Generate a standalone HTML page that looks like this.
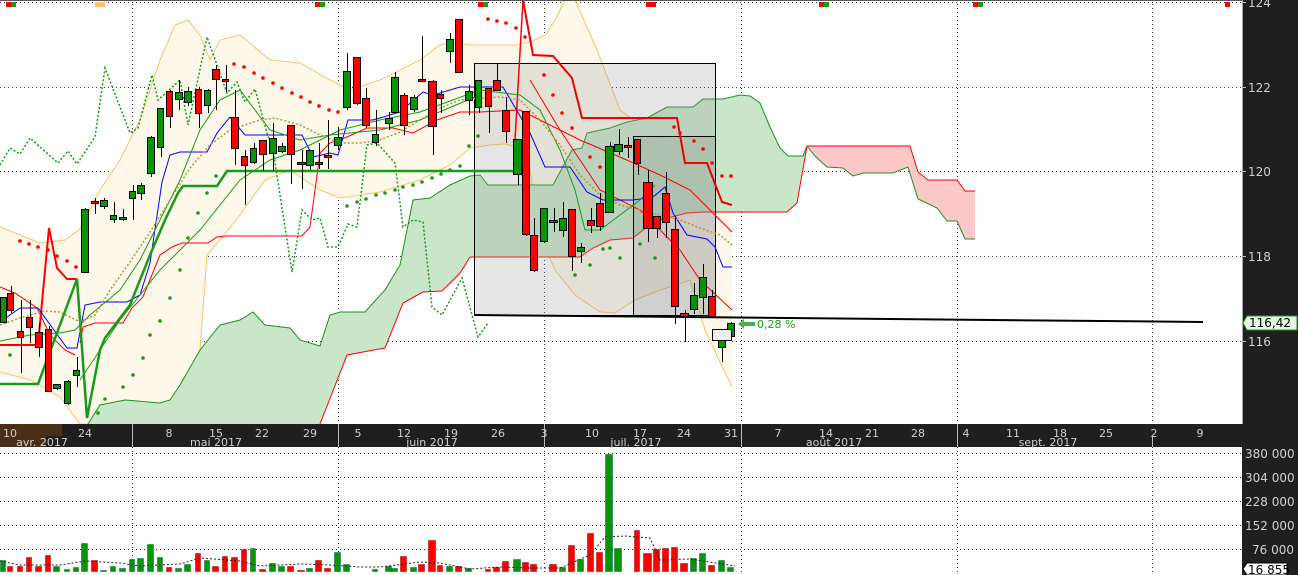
<!DOCTYPE html>
<html><head><meta charset="utf-8"><style>
html,body{margin:0;padding:0;background:#fff;width:1298px;height:575px;overflow:hidden}
svg{display:block}
text{font-family:"DejaVu Sans","Liberation Sans",sans-serif;font-size:11px}
</style></head><body>
<svg id="s" width="1298" height="575" viewBox="0 0 1298 575" xmlns="http://www.w3.org/2000/svg">
<rect x="0" y="0" width="1298" height="575" fill="#fff"/>
<g id="grid" stroke="#333" stroke-width="1" stroke-dasharray="1,3">
<line x1="0" y1="2.5" x2="1242" y2="2.5"/><line x1="0" y1="87.5" x2="1242" y2="87.5"/>
<line x1="0" y1="171.5" x2="1242" y2="171.5"/><line x1="0" y1="256.5" x2="1242" y2="256.5"/>
<line x1="0" y1="341.5" x2="1242" y2="341.5"/>
<line x1="132.5" y1="0" x2="132.5" y2="424"/><line x1="338.5" y1="0" x2="338.5" y2="424"/>
<line x1="544.5" y1="0" x2="544.5" y2="424"/><line x1="741.5" y1="0" x2="741.5" y2="424"/>
<line x1="957.5" y1="0" x2="957.5" y2="424"/><line x1="1152.5" y1="0" x2="1152.5" y2="424"/>
<line x1="0" y1="453.5" x2="1242" y2="453.5"/><line x1="0" y1="477.5" x2="1242" y2="477.5"/>
<line x1="0" y1="501.5" x2="1242" y2="501.5"/><line x1="0" y1="525.5" x2="1242" y2="525.5"/>
<line x1="0" y1="549.5" x2="1242" y2="549.5"/>
<line x1="132.5" y1="447" x2="132.5" y2="575"/><line x1="338.5" y1="447" x2="338.5" y2="575"/>
<line x1="544.5" y1="447" x2="544.5" y2="575"/><line x1="741.5" y1="447" x2="741.5" y2="575"/>
<line x1="957.5" y1="447" x2="957.5" y2="575"/><line x1="1152.5" y1="447" x2="1152.5" y2="575"/>
</g>
<g id="main"></g>
<g id="vol"></g>
<!-- date bar -->
<rect x="0" y="424" width="1242" height="23" fill="#1f1f1f"/>
<rect x="0" y="424" width="62" height="12" fill="#4a2f18"/>
<rect x="0" y="436" width="46" height="11" fill="#4a2f18"/>
<g stroke="#bbb" stroke-width="1">
<line x1="132.5" y1="424" x2="132.5" y2="447"/><line x1="338.5" y1="424" x2="338.5" y2="447"/>
<line x1="544.5" y1="424" x2="544.5" y2="447"/><line x1="741.5" y1="424" x2="741.5" y2="447"/>
<line x1="957.5" y1="424" x2="957.5" y2="447"/><line x1="1152.5" y1="436" x2="1152.5" y2="447"/>
</g>
<g fill="#cfcfcf" text-anchor="middle">
<text x="10" y="437">10</text><text x="85" y="437">24</text><text x="169" y="437">8</text>
<text x="216" y="437">15</text><text x="262" y="437">22</text><text x="310" y="437">29</text>
<text x="358" y="437">5</text><text x="404" y="437">12</text><text x="451" y="437">19</text>
<text x="498" y="437">26</text><text x="544" y="437">3</text><text x="592" y="437">10</text>
<text x="640" y="437">17</text><text x="684" y="437">24</text><text x="731" y="437">31</text>
<text x="778" y="437">7</text><text x="826" y="437">14</text><text x="872" y="437">21</text>
<text x="918" y="437">28</text><text x="966" y="437">4</text><text x="1013" y="437">11</text>
<text x="1060" y="437">18</text><text x="1106" y="437">25</text><text x="1154" y="437">2</text>
<text x="1200" y="437">9</text>
<text x="42" y="446">avr. 2017</text><text x="216" y="446">mai 2017</text><text x="432" y="446">juin 2017</text>
<text x="636" y="446">juil. 2017</text><text x="834" y="446">août 2017</text><text x="1048" y="446">sept. 2017</text>
</g>
<!-- right axis -->
<rect x="1242" y="0" width="56" height="575" fill="#1f1f1f"/>
<line x1="1242.5" y1="0" x2="1242.5" y2="424" stroke="#aaa"/>
<g stroke="#bbb"><line x1="1242" y1="2.5" x2="1246" y2="2.5"/><line x1="1242" y1="87.5" x2="1246" y2="87.5"/><line x1="1242" y1="171.5" x2="1246" y2="171.5"/><line x1="1242" y1="256.5" x2="1246" y2="256.5"/><line x1="1242" y1="341.5" x2="1246" y2="341.5"/></g>
<g fill="#cfcfcf" font-size="12">
<text x="1248" y="7" style="font-size:12px">124</text><text x="1248" y="92" style="font-size:12px">122</text>
<text x="1248" y="176" style="font-size:12px">120</text><text x="1248" y="261" style="font-size:12px">118</text>
<text x="1248" y="346" style="font-size:12px">116</text>
<text x="1245" y="458" style="font-size:12px">380 000</text><text x="1245" y="482" style="font-size:12px">304 000</text>
<text x="1245" y="506" style="font-size:12px">228 000</text><text x="1245" y="530" style="font-size:12px">152 000</text>
<text x="1252" y="554" style="font-size:12px">76 000</text>
</g>
<path d="M1247,316 H1297 V330 H1247 L1243,323 Z" fill="#e6f5e6" stroke="#1a9a1a"/>
<text x="1249" y="327" fill="#000" style="font-size:12px">116,42</text>
<path d="M1247,563 H1287 V575 H1247 L1243,569 Z" fill="#fff" stroke="#000"/>
<text x="1248" y="574" fill="#000" style="font-size:12px">16 855</text>
<line x1="0" y1="0.5" x2="1242" y2="0.5" stroke="#555"/>
<text x="757" y="328" fill="#1a9a1a" style="font-size:11px">0,28 %</text>
</svg>
<script>
var NS="http://www.w3.org/2000/svg";
function el(p,t,a){var e=document.createElementNS(NS,t);for(var k in a)e.setAttribute(k,a[k]);p.appendChild(e);return e;}
var g=document.getElementById("main"),v=document.getElementById("vol");
function pts(a){var s="";for(var i=0;i<a.length;i+=2)s+=(i?"L":"M")+a[i]+","+a[i+1];return s;}
function poly(a,stroke,w,dash,fill){var d={d:pts(a),fill:fill||"none",stroke:stroke,"stroke-width":w||1};if(dash)d["stroke-dasharray"]=dash;return el(g,"path",d);}
// bollinger
var up=[0,227,10,231,40,243,65,240,80,229,100,190,120,160,140,120,160,60,175,25,188,20,200,35,210,60,220,40,240,35,270,60,300,63,330,80,350,90,380,80,420,60,440,45,450,42,470,45,515,45,530,42,545,35,555,20,565,0,575,0,597,50,620,110,640,125,657,130,673,115,700,106,732,105];
var lo=[0,372,30,380,60,397,80,424,175,424,185,390,200,350,207,255,220,240,240,215,265,180,290,170,320,190,340,198,380,192,420,180,450,165,470,148,490,145,505,144,520,148,530,170,540,235,555,270,575,295,600,312,615,313,635,300,660,290,690,280,705,330,720,362,732,387];
var band=up.slice();for(var i=lo.length-2;i>=0;i-=2)band.push(lo[i],lo[i+1]);
el(g,"path",{d:pts(band)+"Z",fill:"#fdf8ea"});
poly(up,"#fcc46a",1);poly(lo,"#fcc46a",1);
// clouds
var cA1=[88,424,100,405,125,400,160,403,170,400,180,385,200,350,220,325,240,320,253,312,265,325,290,328,300,340,320,346,330,315,340,312,365,312,385,290,400,265,413,200,430,198,450,185,470,176,480,175,488,185,553,185,572,150,582,148,587,133,610,128,627,122,647,118,667,107,693,107,703,99,723,99,740,95,750,96,760,103,770,127,780,148,788,156,803,156,807,146];
var cB1=[320,424,347,355,385,348,403,303,423,292,442,291,460,273,470,257,580,257,593,248,610,240,633,238,643,230,660,220,687,213,703,212,787,212,797,203,807,146];
var cl=cA1.slice();for(i=cB1.length-2;i>=0;i-=2)cl.push(cB1[i],cB1[i+1]);
el(g,"path",{d:pts(cl)+"Z",fill:"#c9e6c9"});
poly(cA1,"#1f8f1f",1);poly(cB1,"#f00",1);
var rT=[807,146,910,146,918,172,928,180,957,180,965,191,975,191];
var rB=[807,146,815,156,827,167,843,168,853,176,863,173,893,173,908,167,918,199,937,208,947,221,957,221,965,239,975,239];
var rc=rT.slice();for(i=rB.length-2;i>=0;i-=2)rc.push(rB[i],rB[i+1]);
el(g,"path",{d:pts(rc)+"Z",fill:"#fcc8c8"});poly(rT,"#f00",1);poly(rB,"#1f8f1f",1);
// grey boxes
el(g,"rect",{x:474.5,y:63.5,width:241,height:252,fill:"rgba(150,150,150,0.25)",stroke:"#000"});
el(g,"rect",{x:633.5,y:136.5,width:82,height:179,fill:"rgba(120,120,120,0.2)",stroke:"#000"});
// lines
poly([0,345,38,345,49,228,57,268,67,279,77,279],"#f00",2);
poly([80,343,83,327,95,323,123,323,132,308,143,297,160,255,172,247,182,243,208,243,217,237,227,236,302,236,310,227,320,153,330,143,347,137,367,128,393,128,413,133,437,120,460,112,480,112,520,110,540,120,580,140,620,157,660,175,690,190,710,210,725,225,732,232],"#f00",1);
poly([0,287,15,293,37,308,50,335,65,350,75,355],"#f00",1);
poly([515,140,523,0],"#f00",1.5);
poly([523,0,533,55,553,56,572,78,582,118,677,118,685,163,707,163,722,202,732,205],"#e00",2);
poly([530,80,560,130,600,190,640,210,680,250,700,280,732,310],"#f00",1);
poly([0,322,20,308,38,308,67,348,77,348,85,305,100,302,127,302,140,295,150,263,162,182,170,155,180,152,207,152,217,133,230,117,245,135,302,135,313,157,330,153,338,155,348,120,373,120,400,112,423,92,433,95,460,87,503,87,530,133,545,167,570,167,587,192,603,200,633,200,653,197,665,187,673,213,687,235,707,239,715,247,723,267,732,267],"#00f",1);
poly([0,384,38,384,77,279,87,418,100,350,105,338,130,305,150,255,165,220,178,193,183,186,217,186,227,171,520,171],"#1a9a1a",2.5);
poly([0,341,30,335,60,333,75,330,90,315,120,290,140,260,160,220,180,180,200,130,220,100,240,90,270,130,300,140,330,135,380,130,420,120,480,95],"#1a9a1a",1);
poly([80,380,120,320,160,270,200,230,240,180,270,160,300,150,340,130,380,120,420,112,480,90,520,95,540,110,560,150,575,190,585,230,600,230,620,215,640,200,655,185],"#1a9a1a",1);
poly([0,325,20,318,45,311,60,312,80,322,95,315,110,290,130,262,150,232,170,200,190,168,210,145,230,130,260,120,275,118,300,125,320,135,340,143,360,143,380,140,400,132,420,120,440,108,460,100,500,97,520,100,540,120,560,145,580,175,600,195,620,205,640,210,660,215,680,220,700,228,720,235,732,245],"#b8962e",1.5,"2,2");
poly([0,165,10,148,20,154,30,138,58,163,68,151,77,164,95,137,105,68,130,133,138,128,152,75,158,100,180,80,188,125,207,37,227,93,237,82,245,102,255,89,267,133,273,150,292,272,302,210,312,220,320,218,328,247,338,247,348,224,357,227,367,145,377,143,395,163,403,227,413,220,423,222,432,307,442,315,462,278,478,337,488,323],"#1a9a1a",1.5,"2,2");
// dots
var rd=[20,241,29,244,38,247,48,250,57,256,67,261,76,267,234,64,244,67,254,73,263,78,273,83,282,88,292,93,301,97,310,102,319,106,329,110,338,112,488,19,497,21,506,23,516,28,525,37,544,75,553,95,562,113,572,128,590,157,600,167,674,127,680,133,694,141,703,149,712,163,722,176,731,176];
for(i=0;i<rd.length;i+=2)el(g,"circle",{cx:rd[i],cy:rd[i+1],r:1.8,fill:"#f00"});
var gd=[10,355,98,413,105,399,123,387,133,375,143,358,150,335,160,321,170,298,180,270,188,238,198,213,207,193,216,176,347,206,357,202,366,199,376,195,385,193,395,190,403,187,413,185,422,182,432,178,441,174,450,170,460,166,469,146,478,136,610,248,620,258,603,249,640,244,655,258,590,265,575,275];
for(i=0;i<gd.length;i+=2)el(g,"circle",{cx:gd[i],cy:gd[i+1],r:1.8,fill:"#1a9a1a"});
// candles [x1,x2,bt,bb,wt,wb,c]
var C=[[0,7,297,322,297,322,1],[7,14,293,310,286,313,0],[17,24,331,337,300,373,0],[26,33,317,327,300,343,0],[35,43,332,347,323,357,0],[45,52,329,391,326,391,0],[53,61,384,388,384,390,1],[64,71,381,403,380,405,1],[73,80,370,375,357,387,1],[81,89,209,272,208,272,1],[91,99,201,203,198,214,0],[100,108,200,206,198,209,1],[110,117,215,219,202,223,1],[119,127,217,219,209,221,1],[129,136,191,198,185,220,1],[137,145,185,193,183,200,1],[147,155,137,173,136,177,1],[157,164,108,147,108,157,1],[166,173,91,116,90,128,0],[175,183,92,99,80,110,1],[184,192,91,102,87,106,1],[195,202,89,113,87,128,0],[204,211,90,105,89,113,1],[212,220,69,79,65,110,0],[222,229,79,81,65,92,2],[231,239,117,148,90,165,0],[241,248,156,165,150,205,0],[250,257,148,162,143,164,1],[259,267,140,154,140,171,0],[269,277,138,153,123,171,1],[278,286,146,151,143,153,1],[287,295,125,154,125,184,0],[297,306,162,164,150,189,2],[306,314,150,165,150,170,1],[315,323,162,164,143,169,0],[324,332,155,157,120,169,2],[334,342,137,145,127,150,1],[343,351,71,107,53,110,1],[353,361,57,103,57,105,0],[362,370,98,125,88,128,0],[372,379,134,142,110,146,1],[385,393,118,123,112,130,1],[391,399,77,112,72,113,1],[400,408,95,125,93,135,0],[410,418,97,109,95,112,1],[418,426,79,81,36,80,2],[428,437,81,126,80,155,0],[437,444,94,98,90,113,0],[446,454,39,51,33,63,1],[455,463,19,72,19,72,0],[465,473,91,100,85,115,1],[475,482,80,107,80,113,1],[485,492,88,106,88,133,0],[493,501,80,90,63,91,0],[502,510,110,131,97,143,0],[513,522,139,174,139,185,1],[522,530,111,234,111,236,0],[530,538,235,270,218,272,0],[540,548,208,241,208,243,1],[549,558,220,222,208,232,2],[559,567,218,230,202,237,1],[568,576,209,256,209,271,0],[577,585,247,251,243,263,1],[587,595,220,225,208,233,0],[596,604,203,226,193,231,0],[605,614,146,212,142,212,1],[614,623,144,151,129,155,1],[624,632,145,147,137,158,0],[634,641,139,163,139,175,0],[643,653,182,228,170,242,0],[653,661,216,228,216,238,0],[662,670,193,222,172,238,0],[671,679,229,306,216,324,0],[680,689,313,316,310,342,0],[690,698,295,309,283,314,1],[699,707,277,297,264,314,1],[708,716,296,316,290,316,0],[718,726,337,347,332,362,1],[727,735,323,336,322,338,1]];
var vt=[560,566,566,557,566,555,566,569,567,543,560,570,566,568,559,558,544,557,567,568,564,553,560,566,556,557,549,548,569,563,566,566,570,568,560,568,552,564,572,572,569,566,568,556,567,564,540,565,566,566,568,571,569,567,561,559,562,564,573,564,567,545,559,533,552,454,548,571,530,553,549,548,547,563,558,553,565,560,567];
C.forEach(function(c,i){
 var cx=Math.round((c[0]+c[1])/2)+0.5;
 el(g,"line",{x1:cx,y1:c[4],x2:cx,y2:c[5],stroke:"#000","stroke-width":1});
 var col=c[6]==1?"#079407":(c[6]==0?"#f00":"#f00");
 var h=Math.max(c[3]-c[2],2);
 el(g,"rect",{x:c[0]+0.5,y:c[2]+0.5,width:c[1]-c[0]-1,height:h,fill:col,stroke:"#000","stroke-width":1});
 var t=vt[i]||566;
 el(v,"rect",{x:c[0]+0.5,y:t+0.5,width:c[1]-c[0]-2,height:571-t,fill:c[6]==1?"#079407":"#f00",stroke:c[6]==1?"#064":"#900","stroke-width":0.5});
});
// volume MA
el(v,"path",{d:pts([0,561,20,565,60,565,85,561,120,563,140,566,180,564,200,558,240,561,260,566,300,564,330,565,360,567,380,567,420,562,440,563,470,569,500,567,530,568,560,568,590,555,605,537,625,536,650,538,660,560,690,559,735,566]),fill:"none",stroke:"#222","stroke-width":1,"stroke-dasharray":"2,2"});
// trendline
poly([474,315,1203,322],"#000",2);
el(g,"rect",{x:712.5,y:329.5,width:19,height:11,fill:"#eee",stroke:"#000"});
el(g,"path",{d:"M738,324 L744,319 V322 H755 V326 H744 V329 Z",fill:"#4caf50"});
// top markers
[[6,"#f00"],[11,"#1a9a1a"],[95,"#fcc46a"],[100,"#fcc46a"],[315,"#f00"],[320,"#1a9a1a"],[478,"#f00"],[483,"#1a9a1a"],[646,"#f00"],[651,"#f00"],[819,"#f00"],[824,"#1a9a1a"],[973,"#f00"],[978,"#1a9a1a"],[1225,"#f00"]].forEach(function(m){el(g,"rect",{x:m[0],y:2,width:5,height:5,fill:m[1]});});
</script>
</body></html>
